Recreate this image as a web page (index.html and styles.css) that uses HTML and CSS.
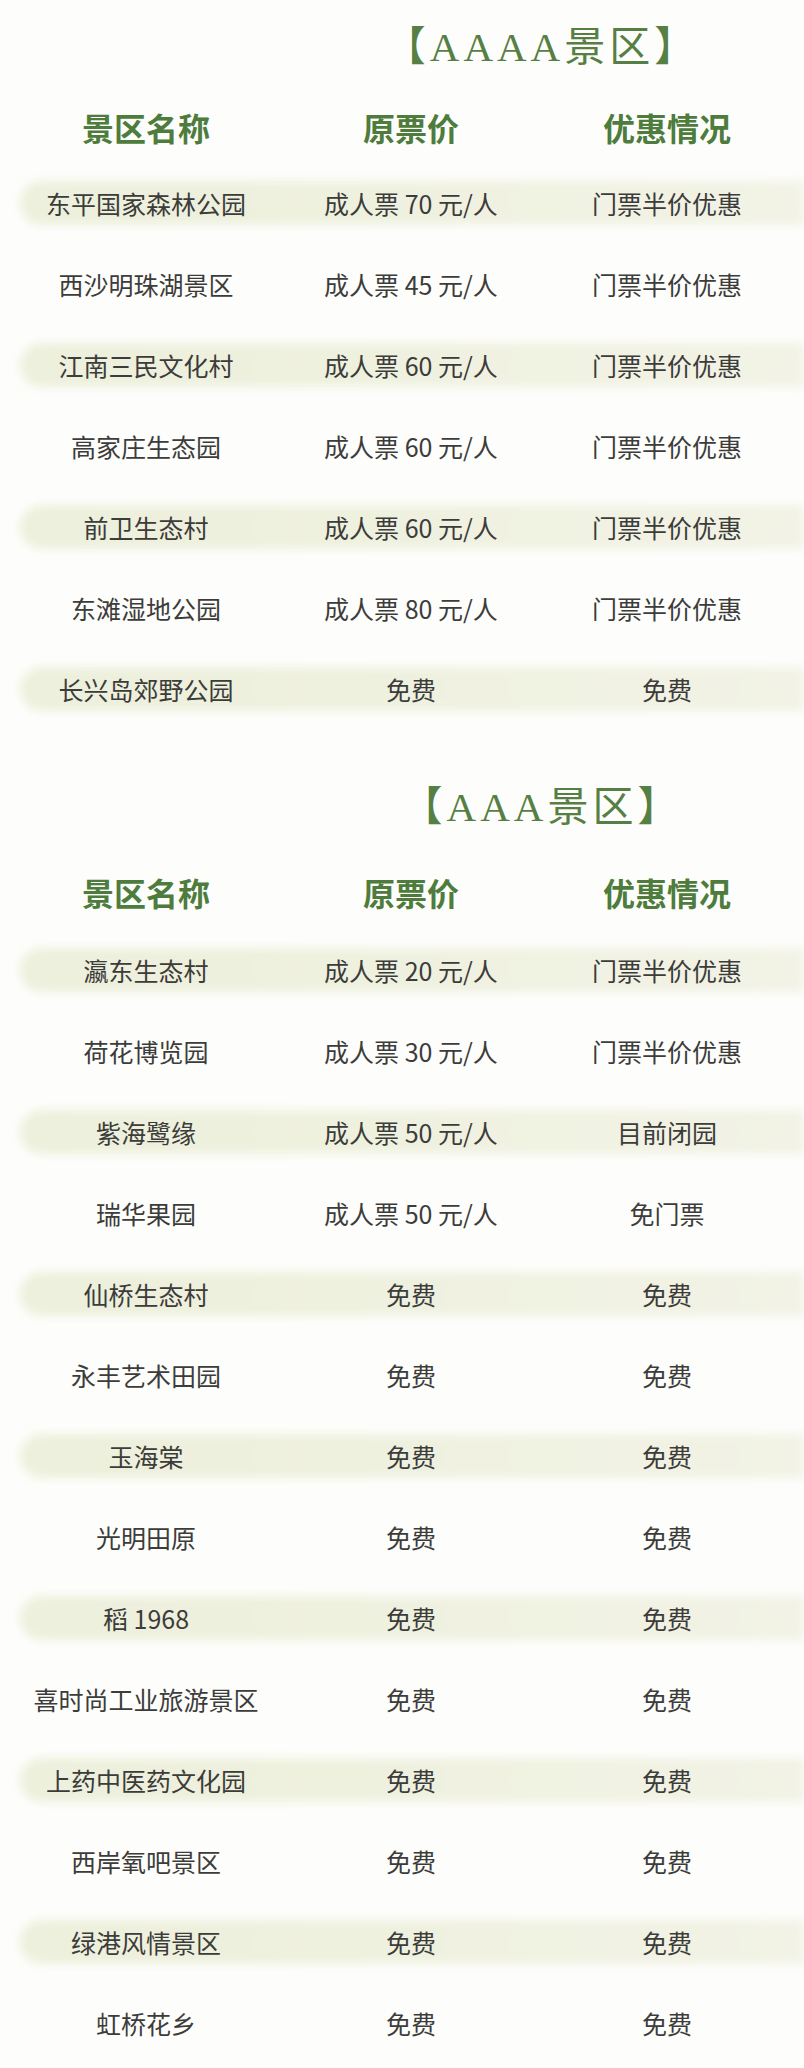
FILE: index.html
```html
<!DOCTYPE html>
<html lang="zh-CN">
<head>
<meta charset="utf-8">
<title>景区门票优惠</title>
<link rel="stylesheet" href="styles.css">
</head>
<body>
<section class="section s1">
  <h2 class="title">【AAAA景区】</h2>
  <div class="grid head"><div>景区名称</div><div>原票价</div><div>优惠情况</div></div>
  <div class="rows">
    <div class="grid row band"><div>东平国家森林公园</div><div>成人票 70 元/人</div><div>门票半价优惠</div></div>
    <div class="grid row"><div>西沙明珠湖景区</div><div>成人票 45 元/人</div><div>门票半价优惠</div></div>
    <div class="grid row band"><div>江南三民文化村</div><div>成人票 60 元/人</div><div>门票半价优惠</div></div>
    <div class="grid row"><div>高家庄生态园</div><div>成人票 60 元/人</div><div>门票半价优惠</div></div>
    <div class="grid row band"><div>前卫生态村</div><div>成人票 60 元/人</div><div>门票半价优惠</div></div>
    <div class="grid row"><div>东滩湿地公园</div><div>成人票 80 元/人</div><div>门票半价优惠</div></div>
    <div class="grid row band"><div>长兴岛郊野公园</div><div>免费</div><div>免费</div></div>
  </div>
</section>
<section class="section s2">
  <h2 class="title">【AAA景区】</h2>
  <div class="grid head"><div>景区名称</div><div>原票价</div><div>优惠情况</div></div>
  <div class="rows">
    <div class="grid row band"><div>瀛东生态村</div><div>成人票 20 元/人</div><div>门票半价优惠</div></div>
    <div class="grid row"><div>荷花博览园</div><div>成人票 30 元/人</div><div>门票半价优惠</div></div>
    <div class="grid row band"><div>紫海鹭缘</div><div>成人票 50 元/人</div><div>目前闭园</div></div>
    <div class="grid row"><div>瑞华果园</div><div>成人票 50 元/人</div><div>免门票</div></div>
    <div class="grid row band"><div>仙桥生态村</div><div>免费</div><div>免费</div></div>
    <div class="grid row"><div>永丰艺术田园</div><div>免费</div><div>免费</div></div>
    <div class="grid row band"><div>玉海棠</div><div>免费</div><div>免费</div></div>
    <div class="grid row"><div>光明田原</div><div>免费</div><div>免费</div></div>
    <div class="grid row band"><div>稻 1968</div><div>免费</div><div>免费</div></div>
    <div class="grid row"><div>喜时尚工业旅游景区</div><div>免费</div><div>免费</div></div>
    <div class="grid row band"><div>上药中医药文化园</div><div>免费</div><div>免费</div></div>
    <div class="grid row"><div>西岸氧吧景区</div><div>免费</div><div>免费</div></div>
    <div class="grid row band"><div>绿港风情景区</div><div>免费</div><div>免费</div></div>
    <div class="grid row"><div>虹桥花乡</div><div>免费</div><div>免费</div></div>
  </div>
</section>
</body>
</html>
```
FILE: styles.css
```css
html, body {
  margin: 0;
  padding: 0;
}
body {
  width: 804px;
  min-height: 2068px;
  background: #fdfdfb;
  font-family: "Noto Sans CJK SC", "Noto Sans", sans-serif;
  overflow: hidden;
}
.section {
  display: flex;
  flex-direction: column;
}
.s1 {
  padding-top: 17px;
}
.s2 {
  margin-top: 65px;
}
.title {
  margin: 0;
  height: 60px;
  line-height: 60px;
  padding-left: 280px;
  text-align: center;
  font-family: "Liberation Serif", "Noto Sans CJK SC", serif;
  font-weight: 400;
  font-size: 41px;
  letter-spacing: 4px;
  color: #567f44;
  white-space: nowrap;
}
.grid {
  display: grid;
  grid-template-columns: 292px 238px 274px;
  align-items: center;
  text-align: center;
  white-space: nowrap;
}
.head {
  height: 46px;
  font-size: 32px;
  font-weight: 700;
  color: #4e7c3d;
}
.s1 .head {
  margin-top: 27px;
}
.s2 .head {
  margin-top: 32px;
}
.rows {
  display: flex;
  flex-direction: column;
  gap: 35px;
}
.s1 .rows {
  margin-top: 30px;
}
.s2 .rows {
  margin-top: 32px;
}
.row {
  height: 46px;
  font-size: 25px;
  color: #3c3c3a;
  position: relative;
  isolation: isolate;
}
.band::before {
  content: "";
  position: absolute;
  left: 20px;
  right: 0;
  top: 1px;
  bottom: 1px;
  border-radius: 22px 0 0 22px;
  background: linear-gradient(to right, #edf0dc 0%, #eff1df 40%, #f2f3e6 100%);
  filter: blur(4px);
  z-index: -1;
}
```
